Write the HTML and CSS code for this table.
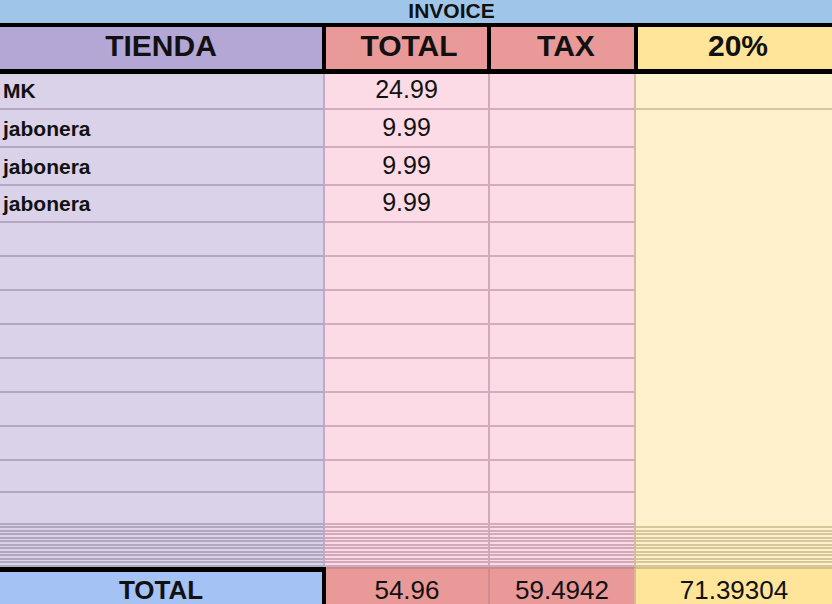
FILE: index.html
```html
<!DOCTYPE html>
<html lang="es">
<head>
<meta charset="utf-8">
<title>Invoice</title>
<link rel="stylesheet" href="styles.css">
</head>
<body>
<div class="sheet">
  <div class="title">INVOICE</div>
  <div class="head">
    <div class="hc hc-a">TIENDA</div>
    <div class="hc hc-b">TOTAL</div>
    <div class="hc hc-c">TAX</div>
    <div class="hc hc-d">20%</div>
  </div>
  <div class="rows">
    <div class="row h36">
      <div class="cell a name">MK</div><div class="cell b num">24.99</div><div class="cell c"></div><div class="cell d lined"></div>
    </div>
    <div class="row h38">
      <div class="cell a name">jabonera</div><div class="cell b num">9.99</div><div class="cell c"></div><div class="cell d"></div>
    </div>
    <div class="row h38">
      <div class="cell a name">jabonera</div><div class="cell b num">9.99</div><div class="cell c"></div><div class="cell d"></div>
    </div>
    <div class="row h37">
      <div class="cell a name">jabonera</div><div class="cell b num">9.99</div><div class="cell c"></div><div class="cell d"></div>
    </div>
    <div class="row h34"><div class="cell a"></div><div class="cell b"></div><div class="cell c"></div><div class="cell d"></div></div>
    <div class="row h34"><div class="cell a"></div><div class="cell b"></div><div class="cell c"></div><div class="cell d"></div></div>
    <div class="row h34"><div class="cell a"></div><div class="cell b"></div><div class="cell c"></div><div class="cell d"></div></div>
    <div class="row h34"><div class="cell a"></div><div class="cell b"></div><div class="cell c"></div><div class="cell d"></div></div>
    <div class="row h34"><div class="cell a"></div><div class="cell b"></div><div class="cell c"></div><div class="cell d"></div></div>
    <div class="row h34"><div class="cell a"></div><div class="cell b"></div><div class="cell c"></div><div class="cell d"></div></div>
    <div class="row h34"><div class="cell a"></div><div class="cell b"></div><div class="cell c"></div><div class="cell d"></div></div>
    <div class="row h32"><div class="cell a"></div><div class="cell b"></div><div class="cell c"></div><div class="cell d"></div></div>
    <div class="row h32"><div class="cell a"></div><div class="cell b"></div><div class="cell c"></div><div class="cell d"></div></div>
  </div>
  <div class="band">
    <div class="bc a"></div><div class="bc b"></div><div class="bc c"></div><div class="bc d"></div>
  </div>
  <div class="totals">
    <div class="tc t-label">TOTAL</div>
    <div class="tc t-b">54.96</div>
    <div class="tc t-c">59.4942</div>
    <div class="tc t-d">71.39304</div>
  </div>
</div>
</body>
</html>
```

FILE: styles.css
```css
html, body {
  margin: 0;
  padding: 0;
  overflow: hidden;
  background: #ffffff;
}

body {
  font-family: "Liberation Sans", Arial, sans-serif;
  color: #000;
}

.sheet {
  width: 832px;
  height: 604px;
  overflow: hidden;
}

/* Title bar */
.title {
  height: 23px;
  box-sizing: border-box;
  background: #9fc5e8;
  font-weight: bold;
  font-size: 21px;
  line-height: 21px;
  text-align: center;
  padding-left: 71px;
  color: #111;
}

/* Header row */
.head {
  display: grid;
  grid-template-columns: 326px 165px 147px 1fr;
  border-top: 4px solid #000;
  border-bottom: 5px solid #000;
  height: 42px;
}

.hc {
  display: flex;
  justify-content: center;
  align-items: flex-end;
  padding-bottom: 8px;
  font-size: 30px;
  font-weight: bold;
  line-height: 30px;
  color: #111;
}

.hc-a, .hc-b, .hc-c {
  border-right: 4px solid #000;
}

.hc-a { background: #b4a7d6; }
.hc-b { background: #ea9999; padding-left: 5px; }
.hc-c { background: #ea9999; padding-left: 7px; }
.hc-d { background: #ffe599; padding-left: 6px; }

/* Data rows */
.row {
  display: grid;
  grid-template-columns: 325px 165px 146px 1fr;
}

.h36 { height: 36px; }
.h38 { height: 38px; }
.h37 { height: 37px; }
.h34 { height: 34px; }
.h32 { height: 32px; }

.cell {
  display: flex;
  align-items: flex-end;
  border-bottom: 2px solid transparent;
}

.cell.a {
  background: #d9d2e9;
  border-bottom-color: #b3a8c3;
  border-right: 2px solid #c3a9c6;
}

.cell.b {
  background: #fcdbe7;
  border-bottom-color: #d3adbd;
  border-right: 2px solid #cfaabb;
}

.cell.c {
  background: #fcdbe7;
  border-bottom-color: #d3adbd;
  border-right: 2px solid #d3bca6;
}

.cell.d {
  background: #fff1cc;
}

.cell.d.lined {
  border-bottom-color: #d8c59f;
}

.name {
  font-size: 21px;
  font-weight: bold;
  line-height: 21px;
  padding: 0 0 7px 3px;
  color: #111;
}

.num {
  justify-content: center;
  font-size: 25px;
  line-height: 25px;
  padding-bottom: 6px;
  color: #111;
}

/* Collapsed (hidden) rows band */
.band {
  display: grid;
  grid-template-columns: 325px 165px 146px 1fr;
  height: 42px;
}

.bc.a {
  background: repeating-linear-gradient(to bottom, #d9d2e9 0, #d9d2e9 1.5px, #b1a7bf 1.5px, #b1a7bf 3.5px);
  border-right: 2px solid #c3a9c6;
}

.bc.b {
  background: repeating-linear-gradient(to bottom, #fcdbe7 0, #fcdbe7 1.5px, #d2a9b8 1.5px, #d2a9b8 3.5px);
  border-right: 2px solid #cfaabb;
}

.bc.c {
  background: repeating-linear-gradient(to bottom, #fcdbe7 0, #fcdbe7 1.5px, #d2a9b8 1.5px, #d2a9b8 3.5px);
  border-right: 2px solid #d3bca6;
}

.bc.d {
  background: repeating-linear-gradient(to bottom, #fff1cc 0, #fff1cc 1.5px, #d8c69b 1.5px, #d8c69b 3.5px);
}

/* Totals row */
.totals {
  display: grid;
  grid-template-columns: 326px 164px 146px 1fr;
  height: 37px;
}

.tc {
  display: flex;
  justify-content: center;
  align-items: flex-end;
  font-size: 26px;
  line-height: 26px;
  padding-bottom: 1px;
  color: #111;
}

.t-label {
  background: #a4c2f4;
  border-top: 5px solid #000;
  border-right: 4px solid #000;
  font-weight: bold;
}

.t-b {
  background: #ea9999;
  border-top: 2px solid #c98c95;
  border-right: 2px solid #d58a90;
}

.t-c {
  background: #ea9999;
  border-top: 2px solid #c98c95;
  border-right: 2px solid #dcb7a0;
}

.t-d {
  background: #ffe599;
  border-top: 2px solid #d5c08a;
}
```
